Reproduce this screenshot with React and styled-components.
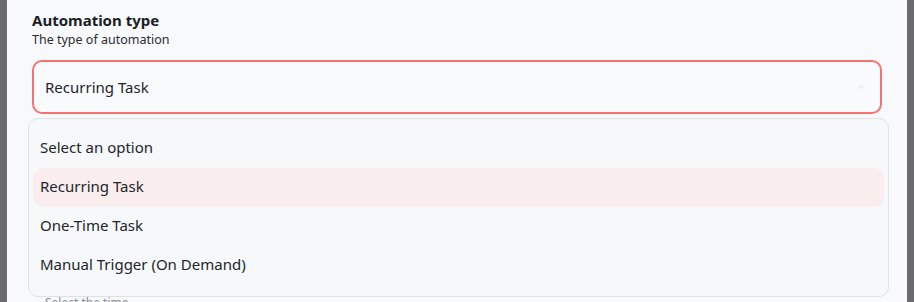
import React from "react"
import styled, { createGlobalStyle } from "styled-components"
import { ChevronUp } from "lucide-react"

const GlobalStyle = createGlobalStyle`
  html, body {
    margin: 0;
    padding: 0;
    background: #f8f9fb;
    font-family: "Noto Sans", "Open Sans", sans-serif;
    color: #1f2328;
    overflow: hidden;
  }
`

const Frame = styled.div`
  display: flex;
  width: 914px;
  height: 302px;
  overflow: hidden;
`

const Edge = styled.div`
  width: 7px;
  flex: none;
  background: #6b6b6d;
`

const Main = styled.div`
  flex: 1;
  padding: 10px 25px 0;
  background: #f8f9fb;
`

const Field = styled.div`
  position: relative;
`

const Label = styled.div`
  font-size: 15px;
  font-weight: 700;
  line-height: 20px;
  color: #1b1f24;
`

const Hint = styled.div`
  font-size: 12.5px;
  line-height: 17px;
  margin-top: 1px;
  color: #2a2e33;
`

const SelectBox = styled.div`
  position: relative;
  margin-top: 12px;
  height: 54px;
  box-sizing: border-box;
  border: 2px solid #f87171;
  border-radius: 10px;
  background: #f9fafc;
  display: flex;
  align-items: center;
  justify-content: space-between;
  padding: 0 12px 1px 11px;
  font-size: 15px;
  color: #22262b;
`

const Menu = styled.div`
  position: absolute;
  top: calc(100% + 6px);
  left: -6px;
  right: -9px;
  z-index: 2;
  box-sizing: border-box;
  background: #f7f8fa;
  border: 1px solid #dfe1e5;
  border-radius: 10px;
  padding: 10px 4px 11px 4px;
  display: flex;
  flex-direction: column;
`

const Option = styled.div`
  height: 39px;
  display: flex;
  align-items: center;
  padding: 0 0 4px 7px;
  box-sizing: border-box;
  border-radius: 10px;
  font-size: 15px;
  color: #22262b;
  background: ${(p) => (p.$active ? "#f9eded" : "transparent")};
`

const NextHint = styled.div`
  margin-top: 181px;
  padding-left: 13px;
  font-size: 12px;
  line-height: 16px;
  color: #8a8f96;
`

const options = [
  "Select an option",
  "Recurring Task",
  "One-Time Task",
  "Manual Trigger (On Demand)",
]

export default function App() {
  return (
    <>
      <GlobalStyle />
      <Frame>
        <Edge />
        <Main>
          <Field>
            <Label>Automation type</Label>
            <Hint>The type of automation</Hint>
            <SelectBox>
              <span>Recurring Task</span>
              <ChevronUp size={14} color="#eceef2" strokeWidth={2} />
              <Menu>
                {options.map((o) => (
                  <Option key={o} $active={o === "Recurring Task"}>
                    {o}
                  </Option>
                ))}
              </Menu>
            </SelectBox>
          </Field>
          <NextHint>Select the time</NextHint>
        </Main>
        <Edge />
      </Frame>
    </>
  )
}
